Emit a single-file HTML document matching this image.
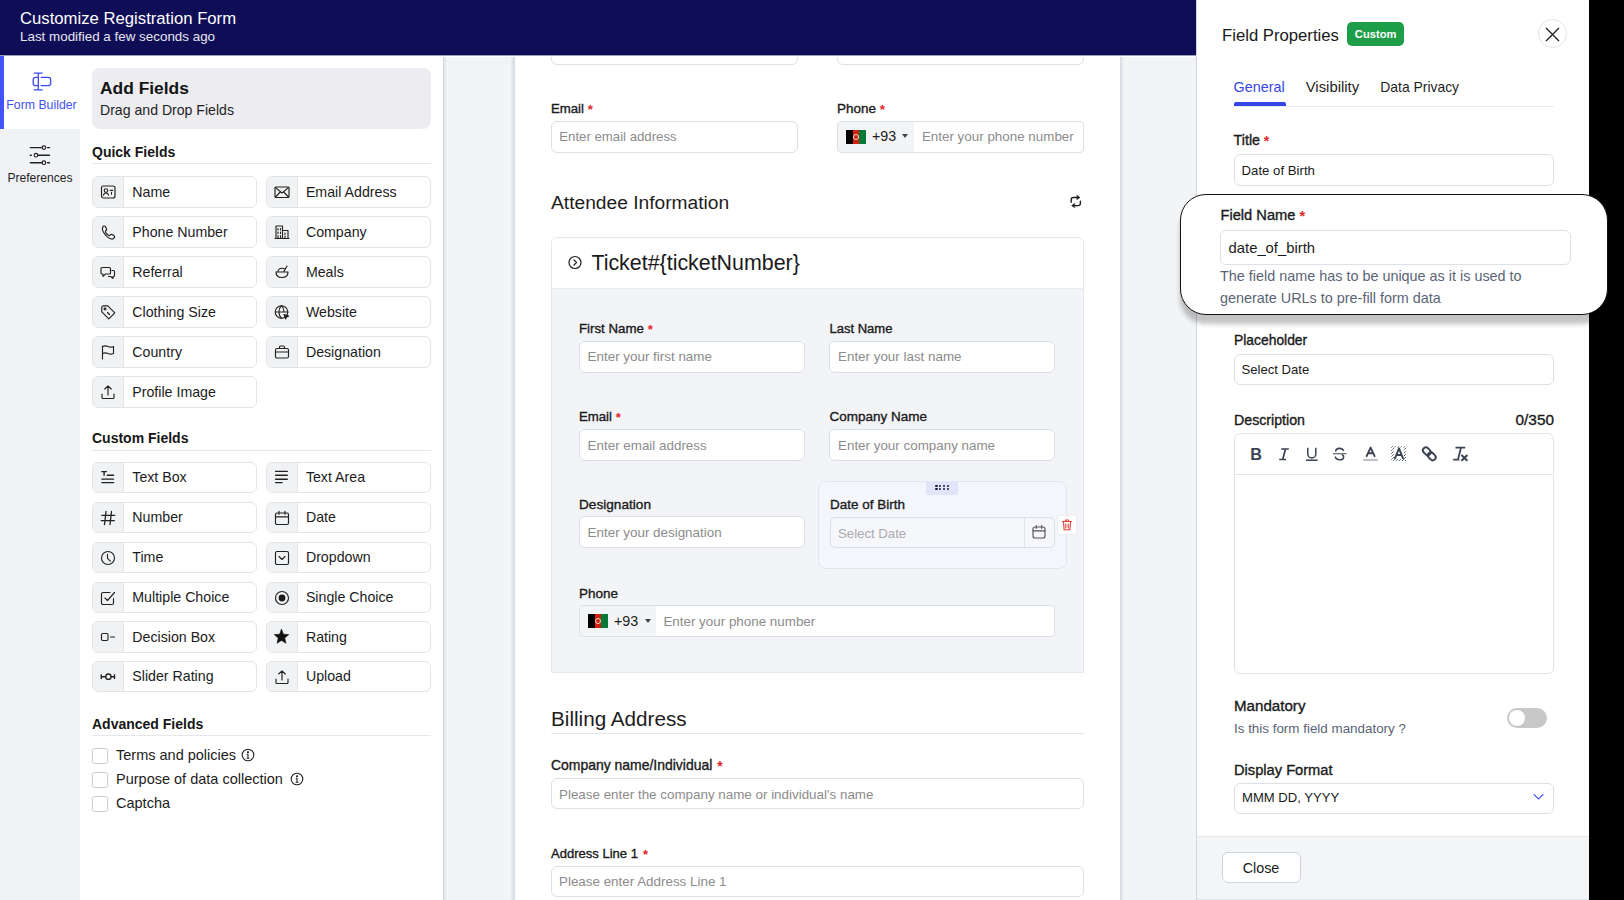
<!DOCTYPE html>
<html><head><meta charset="utf-8"><title>Customize Registration Form</title>
<style>
html,body{margin:0;padding:0;width:1624px;height:900px;overflow:hidden;background:#fff;font-family:"Liberation Sans", sans-serif;}
body{position:relative;}
</style></head><body>
<div style="position:absolute;left:0px;top:55px;width:80px;height:845px;background:#f1f2f5;"></div>
<div style="position:absolute;left:0px;top:56px;width:80px;height:73.4px;background:#ffffff;"></div>
<div style="position:absolute;left:0px;top:56px;width:4px;height:73.4px;background:#4255f4;"></div>
<svg style="position:absolute;left:26px;top:66px;" width="30" height="30" viewBox="0 0 30 30" fill="none" stroke="#222" stroke-width="1.15" stroke-linecap="round" stroke-linejoin="round"><path d="M12.3 7.1V23.9 M8.2 7.1H16.2 M8.2 23.9H16.2 M12.3 11.3H9.7a2.5 2.5 0 0 0-2.5 2.5V17.2a2.5 2.5 0 0 0 2.5 2.5H12.3 M15.2 11.3H22.2a2.5 2.5 0 0 1 2.5 2.5V17.2a2.5 2.5 0 0 1-2.5 2.5H15.2" stroke="#3d4bf0" stroke-width="1.3"/></svg>
<div style="position:absolute;left:-258.50px;width:600px;text-align:center;top:99.00px;font-size:12.3px;line-height:12.3px;font-weight:400;color:#3f52f2;white-space:nowrap;">Form Builder</div>
<svg style="position:absolute;left:28px;top:141px;" width="24" height="26" viewBox="0 0 24 26" fill="none" stroke="#222" stroke-width="1.15" stroke-linecap="round" stroke-linejoin="round"><path d="M2.3 6.6h11.7 M19.5 6.6h2 M2.3 14.2h1 M9.9 14.2h11.6 M2.3 21.7h11.7 M19.5 21.7h2" stroke-width="1.4"/><circle cx="15.9" cy="6.6" r="1.8"/><circle cx="8" cy="14.2" r="1.8"/><circle cx="15.9" cy="21.7" r="1.8"/></svg>
<div style="position:absolute;left:-260.00px;width:600px;text-align:center;top:172.00px;font-size:12.1px;line-height:12.1px;font-weight:400;color:#1f1f1f;white-space:nowrap;">Preferences</div>
<div style="position:absolute;left:80px;top:55px;width:363px;height:845px;background:#ffffff;"></div>
<div style="position:absolute;left:92px;top:68px;width:339px;height:61px;background:#ececf1;border-radius:8px;"></div>
<div style="position:absolute;left:100.00px;top:80.00px;font-size:17.4px;line-height:17.4px;font-weight:700;color:#141414;white-space:nowrap;">Add Fields</div>
<div style="position:absolute;left:100.00px;top:103.00px;font-size:14.1px;line-height:14.1px;font-weight:400;color:#1f1f1f;white-space:nowrap;">Drag and Drop Fields</div>
<div style="position:absolute;left:92.00px;top:145.00px;font-size:14px;line-height:14px;font-weight:700;color:#161616;white-space:nowrap;">Quick Fields</div>
<div style="position:absolute;left:92px;top:163px;width:339px;height:1px;background:#e6e7eb;"></div>
<div style="position:absolute;left:92px;top:176.4px;width:164.8px;height:31.2px;background:#fff;border:1px solid #e2e4e8;box-sizing:border-box;border-radius:6px;overflow:hidden;"></div>
<div style="position:absolute;left:93px;top:177.4px;width:30px;height:29.2px;background:#f1f2f4;border-radius:5px 0 0 5px;"></div>
<div style="position:absolute;left:123px;top:177.4px;width:1px;height:29.2px;background:#e5e7ea;"></div>
<div style="position:absolute;left:132.30px;top:185.00px;font-size:14.2px;line-height:14.2px;font-weight:400;color:#1c1c1c;white-space:nowrap;">Name</div>
<svg style="position:absolute;left:100px;top:184.4px;" width="16" height="16" viewBox="0 0 16 16" fill="none" stroke="#222" stroke-width="1.15" stroke-linecap="round" stroke-linejoin="round"><rect x="1.5" y="2" width="13.5" height="12" rx="2"/><circle cx="6" cy="6.5" r="1.8" stroke-width="1.1"/><path d="M3.3 11.3c.6-1.6 1.6-2.4 2.7-2.4s2.1.8 2.7 2.4 M10.2 6.4h2.6 M11.5 8.4v1.8" stroke-width="1.1"/></svg>
<div style="position:absolute;left:265.6px;top:176.4px;width:165.4px;height:31.2px;background:#fff;border:1px solid #e2e4e8;box-sizing:border-box;border-radius:6px;overflow:hidden;"></div>
<div style="position:absolute;left:266.6px;top:177.4px;width:30px;height:29.2px;background:#f1f2f4;border-radius:5px 0 0 5px;"></div>
<div style="position:absolute;left:296.6px;top:177.4px;width:1px;height:29.2px;background:#e5e7ea;"></div>
<div style="position:absolute;left:305.90px;top:185.00px;font-size:14.2px;line-height:14.2px;font-weight:400;color:#1c1c1c;white-space:nowrap;">Email Address</div>
<svg style="position:absolute;left:273.6px;top:184.4px;" width="16" height="16" viewBox="0 0 16 16" fill="none" stroke="#222" stroke-width="1.15" stroke-linecap="round" stroke-linejoin="round"><rect x="1" y="3" width="14" height="10.5" rx="1"/><path d="M1.3 3.4 8 9l6.7-5.6 M1.5 13l4.8-5 M14.5 13l-4.8-5"/></svg>
<div style="position:absolute;left:92px;top:216.4px;width:164.8px;height:31.2px;background:#fff;border:1px solid #e2e4e8;box-sizing:border-box;border-radius:6px;overflow:hidden;"></div>
<div style="position:absolute;left:93px;top:217.4px;width:30px;height:29.2px;background:#f1f2f4;border-radius:5px 0 0 5px;"></div>
<div style="position:absolute;left:123px;top:217.4px;width:1px;height:29.2px;background:#e5e7ea;"></div>
<div style="position:absolute;left:132.30px;top:225.00px;font-size:14.2px;line-height:14.2px;font-weight:400;color:#1c1c1c;white-space:nowrap;">Phone Number</div>
<svg style="position:absolute;left:100px;top:224.4px;" width="16" height="16" viewBox="0 0 16 16" fill="none" stroke="#222" stroke-width="1.15" stroke-linecap="round" stroke-linejoin="round"><path d="M3.2 2.3c1-.6 1.8-.3 2.3.6l1 1.8c.4.8.1 1.4-.6 1.9-.6.4-.6 1 0 2 .7 1.1 1.5 2 2.5 2.6.9.6 1.5.5 1.9-.2.5-.7 1.2-.9 1.9-.4l1.8 1.1c.8.6.9 1.3.2 2.2-.9 1.2-2.3 1.5-3.7.9C7.9 13.7 4.6 10.4 3 7.2c-.8-1.8-.7-3.6.2-4.9z"/></svg>
<div style="position:absolute;left:265.6px;top:216.4px;width:165.4px;height:31.2px;background:#fff;border:1px solid #e2e4e8;box-sizing:border-box;border-radius:6px;overflow:hidden;"></div>
<div style="position:absolute;left:266.6px;top:217.4px;width:30px;height:29.2px;background:#f1f2f4;border-radius:5px 0 0 5px;"></div>
<div style="position:absolute;left:296.6px;top:217.4px;width:1px;height:29.2px;background:#e5e7ea;"></div>
<div style="position:absolute;left:305.90px;top:225.00px;font-size:14.2px;line-height:14.2px;font-weight:400;color:#1c1c1c;white-space:nowrap;">Company</div>
<svg style="position:absolute;left:273.6px;top:224.4px;" width="16" height="16" viewBox="0 0 16 16" fill="none" stroke="#222" stroke-width="1.15" stroke-linecap="round" stroke-linejoin="round"><path d="M2 14.5V2h6.5v12.5 M8.5 6.5H14v8 M1 14.5h14 M4 4.5v1.5 M6.5 4.5v1.5 M4 8v1.5 M6.5 8v1.5 M4 11.5v3 M6.5 11.5v3 M11 9v1.5 M11 12v2.5"/></svg>
<div style="position:absolute;left:92px;top:256.4px;width:164.8px;height:31.2px;background:#fff;border:1px solid #e2e4e8;box-sizing:border-box;border-radius:6px;overflow:hidden;"></div>
<div style="position:absolute;left:93px;top:257.4px;width:30px;height:29.2px;background:#f1f2f4;border-radius:5px 0 0 5px;"></div>
<div style="position:absolute;left:123px;top:257.4px;width:1px;height:29.2px;background:#e5e7ea;"></div>
<div style="position:absolute;left:132.30px;top:265.00px;font-size:14.2px;line-height:14.2px;font-weight:400;color:#1c1c1c;white-space:nowrap;">Referral</div>
<svg style="position:absolute;left:100px;top:264.4px;" width="16" height="16" viewBox="0 0 16 16" fill="none" stroke="#222" stroke-width="1.15" stroke-linecap="round" stroke-linejoin="round"><path d="M2 3.5h7.5a1 1 0 0 1 1 1V9a1 1 0 0 1-1 1H5.5L3 12.3V10H2a1 1 0 0 1-1-1V4.5a1 1 0 0 1 1-1z M12 6.5h1.5a1 1 0 0 1 1 1v4a1 1 0 0 1-1 1H13v2l-2.3-2H8.5"/></svg>
<div style="position:absolute;left:265.6px;top:256.4px;width:165.4px;height:31.2px;background:#fff;border:1px solid #e2e4e8;box-sizing:border-box;border-radius:6px;overflow:hidden;"></div>
<div style="position:absolute;left:266.6px;top:257.4px;width:30px;height:29.2px;background:#f1f2f4;border-radius:5px 0 0 5px;"></div>
<div style="position:absolute;left:296.6px;top:257.4px;width:1px;height:29.2px;background:#e5e7ea;"></div>
<div style="position:absolute;left:305.90px;top:265.00px;font-size:14.2px;line-height:14.2px;font-weight:400;color:#1c1c1c;white-space:nowrap;">Meals</div>
<svg style="position:absolute;left:273.6px;top:264.4px;" width="16" height="16" viewBox="0 0 16 16" fill="none" stroke="#222" stroke-width="1.15" stroke-linecap="round" stroke-linejoin="round"><path d="M2 8h12c0 3.5-2.6 5.5-6 5.5S2 11.5 2 8z M3.8 8c.4-2.5 2-3.8 4.2-3.8 1.4 0 2.5.5 3.3 1.3 M9.5 8l3.5-6"/></svg>
<div style="position:absolute;left:92px;top:296.4px;width:164.8px;height:31.2px;background:#fff;border:1px solid #e2e4e8;box-sizing:border-box;border-radius:6px;overflow:hidden;"></div>
<div style="position:absolute;left:93px;top:297.4px;width:30px;height:29.2px;background:#f1f2f4;border-radius:5px 0 0 5px;"></div>
<div style="position:absolute;left:123px;top:297.4px;width:1px;height:29.2px;background:#e5e7ea;"></div>
<div style="position:absolute;left:132.30px;top:305.00px;font-size:14.2px;line-height:14.2px;font-weight:400;color:#1c1c1c;white-space:nowrap;">Clothing Size</div>
<svg style="position:absolute;left:100px;top:304.4px;" width="16" height="16" viewBox="0 0 16 16" fill="none" stroke="#222" stroke-width="1.15" stroke-linecap="round" stroke-linejoin="round"><path d="M1.8 3.5V7.8l7 7 6-6-7-7H3.5a1.7 1.7 0 0 0-1.7 1.7z"/><circle cx="5" cy="5" r="0.9"/><path d="M7.5 8.5l2 2" /></svg>
<div style="position:absolute;left:265.6px;top:296.4px;width:165.4px;height:31.2px;background:#fff;border:1px solid #e2e4e8;box-sizing:border-box;border-radius:6px;overflow:hidden;"></div>
<div style="position:absolute;left:266.6px;top:297.4px;width:30px;height:29.2px;background:#f1f2f4;border-radius:5px 0 0 5px;"></div>
<div style="position:absolute;left:296.6px;top:297.4px;width:1px;height:29.2px;background:#e5e7ea;"></div>
<div style="position:absolute;left:305.90px;top:305.00px;font-size:14.2px;line-height:14.2px;font-weight:400;color:#1c1c1c;white-space:nowrap;">Website</div>
<svg style="position:absolute;left:273.6px;top:304.4px;" width="16" height="16" viewBox="0 0 16 16" fill="none" stroke="#222" stroke-width="1.15" stroke-linecap="round" stroke-linejoin="round"><circle cx="7.5" cy="8" r="6.3"/><path d="M1.5 8h12.5 M7.5 1.7c-1.8 1.8-2.6 4-2.6 6.3s.8 4.5 2.6 6.3 M7.5 1.7c1.8 1.8 2.6 4 2.6 6.3"/><path d="M10 10.5l4.5 1.6-2 .8-.8 2z" fill="#2b2b2b"/></svg>
<div style="position:absolute;left:92px;top:336.4px;width:164.8px;height:31.2px;background:#fff;border:1px solid #e2e4e8;box-sizing:border-box;border-radius:6px;overflow:hidden;"></div>
<div style="position:absolute;left:93px;top:337.4px;width:30px;height:29.2px;background:#f1f2f4;border-radius:5px 0 0 5px;"></div>
<div style="position:absolute;left:123px;top:337.4px;width:1px;height:29.2px;background:#e5e7ea;"></div>
<div style="position:absolute;left:132.30px;top:345.00px;font-size:14.2px;line-height:14.2px;font-weight:400;color:#1c1c1c;white-space:nowrap;">Country</div>
<svg style="position:absolute;left:100px;top:344.4px;" width="16" height="16" viewBox="0 0 16 16" fill="none" stroke="#222" stroke-width="1.15" stroke-linecap="round" stroke-linejoin="round"><path d="M2.5 15V2 M2.5 2.5c2-.8 3.5-.8 5.5 0s3.5.8 5.5 0v7c-2 .8-3.5.8-5.5 0s-3.5-.8-5.5 0"/></svg>
<div style="position:absolute;left:265.6px;top:336.4px;width:165.4px;height:31.2px;background:#fff;border:1px solid #e2e4e8;box-sizing:border-box;border-radius:6px;overflow:hidden;"></div>
<div style="position:absolute;left:266.6px;top:337.4px;width:30px;height:29.2px;background:#f1f2f4;border-radius:5px 0 0 5px;"></div>
<div style="position:absolute;left:296.6px;top:337.4px;width:1px;height:29.2px;background:#e5e7ea;"></div>
<div style="position:absolute;left:305.90px;top:345.00px;font-size:14.2px;line-height:14.2px;font-weight:400;color:#1c1c1c;white-space:nowrap;">Designation</div>
<svg style="position:absolute;left:273.6px;top:344.4px;" width="16" height="16" viewBox="0 0 16 16" fill="none" stroke="#222" stroke-width="1.15" stroke-linecap="round" stroke-linejoin="round"><rect x="1.5" y="4.5" width="13" height="9.5" rx="1.5"/><path d="M5.5 4.5V3a1 1 0 0 1 1-1h3a1 1 0 0 1 1 1v1.5 M1.5 8h13"/></svg>
<div style="position:absolute;left:92px;top:376.4px;width:164.8px;height:31.2px;background:#fff;border:1px solid #e2e4e8;box-sizing:border-box;border-radius:6px;overflow:hidden;"></div>
<div style="position:absolute;left:93px;top:377.4px;width:30px;height:29.2px;background:#f1f2f4;border-radius:5px 0 0 5px;"></div>
<div style="position:absolute;left:123px;top:377.4px;width:1px;height:29.2px;background:#e5e7ea;"></div>
<div style="position:absolute;left:132.30px;top:385.00px;font-size:14.2px;line-height:14.2px;font-weight:400;color:#1c1c1c;white-space:nowrap;">Profile Image</div>
<svg style="position:absolute;left:100px;top:384.4px;" width="16" height="16" viewBox="0 0 16 16" fill="none" stroke="#222" stroke-width="1.15" stroke-linecap="round" stroke-linejoin="round"><path d="M2 10v3.5a1 1 0 0 0 1 1h10a1 1 0 0 0 1-1V10 M8 11V1.8 M4.7 5 8 1.8 11.3 5"/></svg>
<div style="position:absolute;left:92.00px;top:431.00px;font-size:14px;line-height:14px;font-weight:700;color:#161616;white-space:nowrap;">Custom Fields</div>
<div style="position:absolute;left:92px;top:449.5px;width:339px;height:1px;background:#e6e7eb;"></div>
<div style="position:absolute;left:92px;top:462.2px;width:164.8px;height:31.2px;background:#fff;border:1px solid #e2e4e8;box-sizing:border-box;border-radius:6px;overflow:hidden;"></div>
<div style="position:absolute;left:93px;top:463.2px;width:30px;height:29.2px;background:#f1f2f4;border-radius:5px 0 0 5px;"></div>
<div style="position:absolute;left:123px;top:463.2px;width:1px;height:29.2px;background:#e5e7ea;"></div>
<div style="position:absolute;left:132.30px;top:470.00px;font-size:14.2px;line-height:14.2px;font-weight:400;color:#1c1c1c;white-space:nowrap;">Text Box</div>
<svg style="position:absolute;left:100px;top:470.2px;" width="16" height="16" viewBox="0 0 16 16" fill="none" stroke="#222" stroke-width="1.15" stroke-linecap="round" stroke-linejoin="round"><path d="M1.8 1.6h4.6 M4.1 1.6v3.6 M7.3 5.3h6.3 M1.9 9.1h11.7 M1.9 12.6h11.7" stroke-width="1.4"/></svg>
<div style="position:absolute;left:265.6px;top:462.2px;width:165.4px;height:31.2px;background:#fff;border:1px solid #e2e4e8;box-sizing:border-box;border-radius:6px;overflow:hidden;"></div>
<div style="position:absolute;left:266.6px;top:463.2px;width:30px;height:29.2px;background:#f1f2f4;border-radius:5px 0 0 5px;"></div>
<div style="position:absolute;left:296.6px;top:463.2px;width:1px;height:29.2px;background:#e5e7ea;"></div>
<div style="position:absolute;left:305.90px;top:470.00px;font-size:14.2px;line-height:14.2px;font-weight:400;color:#1c1c1c;white-space:nowrap;">Text Area</div>
<svg style="position:absolute;left:273.6px;top:470.2px;" width="16" height="16" viewBox="0 0 16 16" fill="none" stroke="#222" stroke-width="1.15" stroke-linecap="round" stroke-linejoin="round"><path d="M1.6 1.4h11.7 M1.6 5.3h11.7 M1.6 9.2h11.7 M1.6 12.6h6.5" stroke-width="1.4"/></svg>
<div style="position:absolute;left:92px;top:502.0px;width:164.8px;height:31.2px;background:#fff;border:1px solid #e2e4e8;box-sizing:border-box;border-radius:6px;overflow:hidden;"></div>
<div style="position:absolute;left:93px;top:503.0px;width:30px;height:29.2px;background:#f1f2f4;border-radius:5px 0 0 5px;"></div>
<div style="position:absolute;left:123px;top:503.0px;width:1px;height:29.2px;background:#e5e7ea;"></div>
<div style="position:absolute;left:132.30px;top:510.00px;font-size:14.2px;line-height:14.2px;font-weight:400;color:#1c1c1c;white-space:nowrap;">Number</div>
<svg style="position:absolute;left:100px;top:510.0px;" width="16" height="16" viewBox="0 0 16 16" fill="none" stroke="#222" stroke-width="1.15" stroke-linecap="round" stroke-linejoin="round"><path d="M6 1.5 4.5 14.5 M11.5 1.5 10 14.5 M1.8 5.3h13 M1.3 10.7h13" stroke-width="1.3"/></svg>
<div style="position:absolute;left:265.6px;top:502.0px;width:165.4px;height:31.2px;background:#fff;border:1px solid #e2e4e8;box-sizing:border-box;border-radius:6px;overflow:hidden;"></div>
<div style="position:absolute;left:266.6px;top:503.0px;width:30px;height:29.2px;background:#f1f2f4;border-radius:5px 0 0 5px;"></div>
<div style="position:absolute;left:296.6px;top:503.0px;width:1px;height:29.2px;background:#e5e7ea;"></div>
<div style="position:absolute;left:305.90px;top:510.00px;font-size:14.2px;line-height:14.2px;font-weight:400;color:#1c1c1c;white-space:nowrap;">Date</div>
<svg style="position:absolute;left:273.6px;top:510.0px;" width="16" height="16" viewBox="0 0 16 16" fill="none" stroke="#222" stroke-width="1.15" stroke-linecap="round" stroke-linejoin="round"><rect x="1.5" y="3" width="13" height="11.5" rx="1.5"/><path d="M1.5 6.8h13 M5 1.3v3 M11 1.3v3"/></svg>
<div style="position:absolute;left:92px;top:541.8px;width:164.8px;height:31.2px;background:#fff;border:1px solid #e2e4e8;box-sizing:border-box;border-radius:6px;overflow:hidden;"></div>
<div style="position:absolute;left:93px;top:542.8px;width:30px;height:29.2px;background:#f1f2f4;border-radius:5px 0 0 5px;"></div>
<div style="position:absolute;left:123px;top:542.8px;width:1px;height:29.2px;background:#e5e7ea;"></div>
<div style="position:absolute;left:132.30px;top:550.00px;font-size:14.2px;line-height:14.2px;font-weight:400;color:#1c1c1c;white-space:nowrap;">Time</div>
<svg style="position:absolute;left:100px;top:549.8px;" width="16" height="16" viewBox="0 0 16 16" fill="none" stroke="#222" stroke-width="1.15" stroke-linecap="round" stroke-linejoin="round"><circle cx="8" cy="8" r="6.5"/><path d="M7.5 4.3V8.3l2.8 2.8"/></svg>
<div style="position:absolute;left:265.6px;top:541.8px;width:165.4px;height:31.2px;background:#fff;border:1px solid #e2e4e8;box-sizing:border-box;border-radius:6px;overflow:hidden;"></div>
<div style="position:absolute;left:266.6px;top:542.8px;width:30px;height:29.2px;background:#f1f2f4;border-radius:5px 0 0 5px;"></div>
<div style="position:absolute;left:296.6px;top:542.8px;width:1px;height:29.2px;background:#e5e7ea;"></div>
<div style="position:absolute;left:305.90px;top:550.00px;font-size:14.2px;line-height:14.2px;font-weight:400;color:#1c1c1c;white-space:nowrap;">Dropdown</div>
<svg style="position:absolute;left:273.6px;top:549.8px;" width="16" height="16" viewBox="0 0 16 16" fill="none" stroke="#222" stroke-width="1.15" stroke-linecap="round" stroke-linejoin="round"><rect x="1.5" y="1.5" width="13" height="13" rx="1.5"/><path d="M5 6.5 8 9.5 11 6.5"/></svg>
<div style="position:absolute;left:92px;top:581.6px;width:164.8px;height:31.2px;background:#fff;border:1px solid #e2e4e8;box-sizing:border-box;border-radius:6px;overflow:hidden;"></div>
<div style="position:absolute;left:93px;top:582.6px;width:30px;height:29.2px;background:#f1f2f4;border-radius:5px 0 0 5px;"></div>
<div style="position:absolute;left:123px;top:582.6px;width:1px;height:29.2px;background:#e5e7ea;"></div>
<div style="position:absolute;left:132.30px;top:590.00px;font-size:14.2px;line-height:14.2px;font-weight:400;color:#1c1c1c;white-space:nowrap;">Multiple Choice</div>
<svg style="position:absolute;left:100px;top:589.6px;" width="16" height="16" viewBox="0 0 16 16" fill="none" stroke="#222" stroke-width="1.15" stroke-linecap="round" stroke-linejoin="round"><path d="M13.5 8.5v4.5a1.5 1.5 0 0 1-1.5 1.5H3A1.5 1.5 0 0 1 1.5 13V4A1.5 1.5 0 0 1 3 2.5h7 M5 8l2.5 2.5 L14.5 2.5"/></svg>
<div style="position:absolute;left:265.6px;top:581.6px;width:165.4px;height:31.2px;background:#fff;border:1px solid #e2e4e8;box-sizing:border-box;border-radius:6px;overflow:hidden;"></div>
<div style="position:absolute;left:266.6px;top:582.6px;width:30px;height:29.2px;background:#f1f2f4;border-radius:5px 0 0 5px;"></div>
<div style="position:absolute;left:296.6px;top:582.6px;width:1px;height:29.2px;background:#e5e7ea;"></div>
<div style="position:absolute;left:305.90px;top:590.00px;font-size:14.2px;line-height:14.2px;font-weight:400;color:#1c1c1c;white-space:nowrap;">Single Choice</div>
<svg style="position:absolute;left:273.6px;top:589.6px;" width="16" height="16" viewBox="0 0 16 16" fill="none" stroke="#222" stroke-width="1.15" stroke-linecap="round" stroke-linejoin="round"><circle cx="8" cy="8" r="6.5"/><circle cx="8" cy="8" r="3.4" fill="#1c1c1c" stroke="none"/></svg>
<div style="position:absolute;left:92px;top:621.4px;width:164.8px;height:31.2px;background:#fff;border:1px solid #e2e4e8;box-sizing:border-box;border-radius:6px;overflow:hidden;"></div>
<div style="position:absolute;left:93px;top:622.4px;width:30px;height:29.2px;background:#f1f2f4;border-radius:5px 0 0 5px;"></div>
<div style="position:absolute;left:123px;top:622.4px;width:1px;height:29.2px;background:#e5e7ea;"></div>
<div style="position:absolute;left:132.30px;top:630.00px;font-size:14.2px;line-height:14.2px;font-weight:400;color:#1c1c1c;white-space:nowrap;">Decision Box</div>
<svg style="position:absolute;left:100px;top:629.4px;" width="16" height="16" viewBox="0 0 16 16" fill="none" stroke="#222" stroke-width="1.15" stroke-linecap="round" stroke-linejoin="round"><rect x="1.5" y="4.5" width="6.5" height="7" rx="1.2"/><path d="M10.5 8h4"/></svg>
<div style="position:absolute;left:265.6px;top:621.4px;width:165.4px;height:31.2px;background:#fff;border:1px solid #e2e4e8;box-sizing:border-box;border-radius:6px;overflow:hidden;"></div>
<div style="position:absolute;left:266.6px;top:622.4px;width:30px;height:29.2px;background:#f1f2f4;border-radius:5px 0 0 5px;"></div>
<div style="position:absolute;left:296.6px;top:622.4px;width:1px;height:29.2px;background:#e5e7ea;"></div>
<div style="position:absolute;left:305.90px;top:630.00px;font-size:14.2px;line-height:14.2px;font-weight:400;color:#1c1c1c;white-space:nowrap;">Rating</div>
<svg style="position:absolute;left:273.6px;top:629.4px;" width="16" height="16" viewBox="0 0 16 16" fill="none" stroke="#222" stroke-width="1.15" stroke-linecap="round" stroke-linejoin="round"><path d="M7.50 0.30 L9.50 5.25 L14.82 5.62 L10.73 9.05 L12.03 14.23 L7.50 11.40 L2.97 14.23 L4.27 9.05 L0.18 5.62 L5.50 5.25z" fill="#111" stroke="#111" stroke-width="0.6"/></svg>
<div style="position:absolute;left:92px;top:661.2px;width:164.8px;height:31.2px;background:#fff;border:1px solid #e2e4e8;box-sizing:border-box;border-radius:6px;overflow:hidden;"></div>
<div style="position:absolute;left:93px;top:662.2px;width:30px;height:29.2px;background:#f1f2f4;border-radius:5px 0 0 5px;"></div>
<div style="position:absolute;left:123px;top:662.2px;width:1px;height:29.2px;background:#e5e7ea;"></div>
<div style="position:absolute;left:132.30px;top:669.00px;font-size:14.2px;line-height:14.2px;font-weight:400;color:#1c1c1c;white-space:nowrap;">Slider Rating</div>
<svg style="position:absolute;left:100px;top:669.2px;" width="16" height="16" viewBox="0 0 16 16" fill="none" stroke="#222" stroke-width="1.15" stroke-linecap="round" stroke-linejoin="round"><path d="M1.3 5.9v3.6 M1.3 7.7h4.4 M11.1 7.7h3.4 M14.5 6v3.4" stroke-width="1.4"/><circle cx="8.4" cy="7.7" r="2.7" stroke-width="1.3"/></svg>
<div style="position:absolute;left:265.6px;top:661.2px;width:165.4px;height:31.2px;background:#fff;border:1px solid #e2e4e8;box-sizing:border-box;border-radius:6px;overflow:hidden;"></div>
<div style="position:absolute;left:266.6px;top:662.2px;width:30px;height:29.2px;background:#f1f2f4;border-radius:5px 0 0 5px;"></div>
<div style="position:absolute;left:296.6px;top:662.2px;width:1px;height:29.2px;background:#e5e7ea;"></div>
<div style="position:absolute;left:305.90px;top:669.00px;font-size:14.2px;line-height:14.2px;font-weight:400;color:#1c1c1c;white-space:nowrap;">Upload</div>
<svg style="position:absolute;left:273.6px;top:669.2px;" width="16" height="16" viewBox="0 0 16 16" fill="none" stroke="#222" stroke-width="1.15" stroke-linecap="round" stroke-linejoin="round"><path d="M2 10v3.5a1 1 0 0 0 1 1h10a1 1 0 0 0 1-1V10 M8 11V1.8 M4.7 5 8 1.8 11.3 5"/></svg>
<div style="position:absolute;left:92.00px;top:717.00px;font-size:14px;line-height:14px;font-weight:700;color:#161616;white-space:nowrap;">Advanced Fields</div>
<div style="position:absolute;left:92px;top:735px;width:339px;height:1px;background:#e6e7eb;"></div>
<div style="position:absolute;left:92px;top:748px;width:15.5px;height:15.5px;background:#fff;border:1px solid #c9ccd3;box-sizing:border-box;border-radius:3px;"></div>
<div style="position:absolute;left:116.00px;top:748.00px;font-size:14.5px;line-height:14.5px;font-weight:400;color:#1c1c1c;white-space:nowrap;">Terms and policies</div>
<svg style="position:absolute;left:241.3px;top:748px;" width="14" height="14" viewBox="0 0 14 14" fill="none" stroke="#222" stroke-width="1.15" stroke-linecap="round" stroke-linejoin="round"><circle cx="7" cy="7" r="5.8" stroke-width="1.1"/><path d="M7 6.2v4 M6 10.2h2 M6.2 6.2H7" stroke-width="1.1"/><circle cx="7" cy="4.2" r="0.5" fill="#2b2b2b"/></svg>
<div style="position:absolute;left:92px;top:772px;width:15.5px;height:15.5px;background:#fff;border:1px solid #c9ccd3;box-sizing:border-box;border-radius:3px;"></div>
<div style="position:absolute;left:116.00px;top:772.00px;font-size:14.5px;line-height:14.5px;font-weight:400;color:#1c1c1c;white-space:nowrap;">Purpose of data collection</div>
<svg style="position:absolute;left:289.8px;top:772px;" width="14" height="14" viewBox="0 0 14 14" fill="none" stroke="#222" stroke-width="1.15" stroke-linecap="round" stroke-linejoin="round"><circle cx="7" cy="7" r="5.8" stroke-width="1.1"/><path d="M7 6.2v4 M6 10.2h2 M6.2 6.2H7" stroke-width="1.1"/><circle cx="7" cy="4.2" r="0.5" fill="#2b2b2b"/></svg>
<div style="position:absolute;left:92px;top:796px;width:15.5px;height:15.5px;background:#fff;border:1px solid #c9ccd3;box-sizing:border-box;border-radius:3px;"></div>
<div style="position:absolute;left:116.00px;top:796.00px;font-size:14.5px;line-height:14.5px;font-weight:400;color:#1c1c1c;white-space:nowrap;">Captcha</div>
<div style="position:absolute;left:444px;top:57px;width:71px;height:843px;background:#f3f4f6;"></div>
<div style="position:absolute;left:443px;top:55px;width:4px;height:845px;background:linear-gradient(90deg,#cbd4db,#e3e8ec 45%,#f3f4f6);"></div>
<div style="position:absolute;left:515px;top:55px;width:605px;height:845px;background:#ffffff;"></div>
<div style="position:absolute;left:510px;top:57px;width:5px;height:843px;background:linear-gradient(90deg,#f3f4f6,#e6e9ee 40%,#d6dde5 80%,#d6dde5);"></div>
<div style="position:absolute;left:1120px;top:57px;width:76px;height:843px;background:#f3f4f6;"></div>
<div style="position:absolute;left:1120px;top:57px;width:4px;height:843px;background:linear-gradient(90deg,#d3dae3,#e2e6eb 40%,#f3f4f6);"></div>
<div style="position:absolute;left:551px;top:30px;width:246.5px;height:34.5px;background:#fff;border:1px solid #dcdfe5;box-sizing:border-box;border-radius:6px;"></div>
<div style="position:absolute;left:837px;top:30px;width:247px;height:34.5px;background:#fff;border:1px solid #dcdfe5;box-sizing:border-box;border-radius:6px;"></div>
<div style="position:absolute;left:551.00px;top:102.00px;font-size:13.2px;line-height:13.2px;font-weight:400;color:#1a1a1a;white-space:nowrap;-webkit-text-stroke:0.35px #1a1a1a;">Email<span style="color:#e0262b;margin-left:3.8px;position:relative;top:1px;-webkit-text-stroke:0;font-weight:700;">*</span></div>
<div style="position:absolute;left:551px;top:121px;width:246.5px;height:31.5px;background:#fff;border:1px solid #dcdfe5;box-sizing:border-box;border-radius:6px;"></div>
<div style="position:absolute;left:559.30px;top:130.00px;font-size:13.2px;line-height:13.2px;font-weight:400;color:#8c8c8c;white-space:nowrap;">Enter email address</div>
<div style="position:absolute;left:837.00px;top:102.00px;font-size:13.481481481481481px;line-height:13.481481481481481px;font-weight:400;color:#1a1a1a;white-space:nowrap;-webkit-text-stroke:0.35px #1a1a1a;">Phone<span style="color:#e0262b;margin-left:3.8px;position:relative;top:1px;-webkit-text-stroke:0;font-weight:700;">*</span></div>
<div style="position:absolute;left:837px;top:121px;width:247px;height:31.5px;background:#fff;border:1px solid #dcdfe5;box-sizing:border-box;border-radius:4px;"></div>
<div style="position:absolute;left:838px;top:122px;width:76px;height:29.5px;background:#f3f4f6;border-radius:3px 0 0 3px;"></div>
<div style="position:absolute;left:846px;top:130px;width:20px;height:13.5px;background:linear-gradient(90deg,#000 0 33%,#d32011 33% 66%,#007a36 66%);"></div>
<div style="position:absolute;left:853px;top:133.5px;width:6px;height:6px;border:1px solid #f4d7c8;border-radius:50%;box-sizing:border-box;"></div>
<div style="position:absolute;left:872.00px;top:129.00px;font-size:14.3px;line-height:14.3px;font-weight:400;color:#1c1c1c;white-space:nowrap;">+93</div>
<div style="position:absolute;left:902px;top:134.3px;width:0;height:0;border-left:3px solid transparent;border-right:3px solid transparent;border-top:4px solid #444;"></div>
<div style="position:absolute;left:921.90px;top:130.00px;font-size:13.4px;line-height:13.4px;font-weight:400;color:#8c8c8c;white-space:nowrap;">Enter your phone number</div>
<div style="position:absolute;left:551.00px;top:193.00px;font-size:19.2px;line-height:19.2px;font-weight:400;color:#1d1d1d;white-space:nowrap;">Attendee Information</div>
<svg style="position:absolute;left:0;top:0" width="1624" height="900" fill="none" stroke-linecap="round" stroke-linejoin="round"><path d="M1071.2 202.2V199.6a2.1 2.1 0 0 1 2.1-2.1H1078 M1080.4 201.2V203.5a2.1 2.1 0 0 1-2.1 2.1H1073.4" stroke="#1c1c1c" stroke-width="1.4"/><path d="M1077.2 195.5 1079.9 197.5 1077.2 199.5z M1074.4 203.6 1071.7 205.6 1074.4 207.6z" fill="#1c1c1c" stroke="#1c1c1c" stroke-width="0.6"/></svg>
<div style="position:absolute;left:551px;top:237px;width:533px;height:436px;background:#f3f4f7;border:1px solid #e6e8ec;box-sizing:border-box;border-radius:6px 6px 0 0;"></div>
<div style="position:absolute;left:552px;top:238px;width:531px;height:51px;background:#ffffff;border-radius:5px 5px 0 0;border-bottom:1px solid #e8eaee;box-sizing:border-box;"></div>
<svg style="position:absolute;left:567px;top:255px;" width="16" height="16" viewBox="0 0 16 16" fill="none" stroke="#222" stroke-width="1.15" stroke-linecap="round" stroke-linejoin="round"><circle cx="8" cy="7.5" r="6" stroke-width="1.2"/><path d="M7 5l2.5 2.5L7 10" stroke-width="1.2"/></svg>
<div style="position:absolute;left:591.40px;top:253.00px;font-size:21.4px;line-height:21.4px;font-weight:400;color:#1a1a1a;white-space:nowrap;">Ticket#{ticketNumber}</div>
<div style="position:absolute;left:579.00px;top:322.00px;font-size:13.284671532846716px;line-height:13.284671532846716px;font-weight:400;color:#1a1a1a;white-space:nowrap;-webkit-text-stroke:0.35px #1a1a1a;">First Name<span style="color:#e0262b;margin-left:3.8px;position:relative;top:1px;-webkit-text-stroke:0;font-weight:700;">*</span></div>
<div style="position:absolute;left:579px;top:341px;width:226px;height:31.5px;background:#fff;border:1px solid #dcdfe5;box-sizing:border-box;border-radius:6px;"></div>
<div style="position:absolute;left:587.60px;top:350.00px;font-size:13.4px;line-height:13.4px;font-weight:400;color:#8c8c8c;white-space:nowrap;">Enter your first name</div>
<div style="position:absolute;left:829.40px;top:322.00px;font-size:13.069423929098967px;line-height:13.069423929098967px;font-weight:400;color:#1a1a1a;white-space:nowrap;-webkit-text-stroke:0.35px #1a1a1a;">Last Name</div>
<div style="position:absolute;left:829.4px;top:341px;width:225.6px;height:31.5px;background:#fff;border:1px solid #dcdfe5;box-sizing:border-box;border-radius:6px;"></div>
<div style="position:absolute;left:838.00px;top:350.00px;font-size:13.4px;line-height:13.4px;font-weight:400;color:#8c8c8c;white-space:nowrap;">Enter your last name</div>
<div style="position:absolute;left:579.00px;top:410.00px;font-size:13.2px;line-height:13.2px;font-weight:400;color:#1a1a1a;white-space:nowrap;-webkit-text-stroke:0.35px #1a1a1a;">Email<span style="color:#e0262b;margin-left:3.8px;position:relative;top:1px;-webkit-text-stroke:0;font-weight:700;">*</span></div>
<div style="position:absolute;left:579px;top:428.5px;width:226px;height:32px;background:#fff;border:1px solid #dcdfe5;box-sizing:border-box;border-radius:6px;"></div>
<div style="position:absolute;left:587.60px;top:439.00px;font-size:13.4px;line-height:13.4px;font-weight:400;color:#8c8c8c;white-space:nowrap;">Enter email address</div>
<div style="position:absolute;left:829.40px;top:410.00px;font-size:13.501976284584979px;line-height:13.501976284584979px;font-weight:400;color:#1a1a1a;white-space:nowrap;-webkit-text-stroke:0.35px #1a1a1a;">Company Name</div>
<div style="position:absolute;left:829.4px;top:428.5px;width:225.6px;height:32px;background:#fff;border:1px solid #dcdfe5;box-sizing:border-box;border-radius:6px;"></div>
<div style="position:absolute;left:838.00px;top:439.00px;font-size:13.4px;line-height:13.4px;font-weight:400;color:#8c8c8c;white-space:nowrap;">Enter your company name</div>
<div style="position:absolute;left:579.00px;top:498.00px;font-size:13.640054127198916px;line-height:13.640054127198916px;font-weight:400;color:#1a1a1a;white-space:nowrap;-webkit-text-stroke:0.35px #1a1a1a;">Designation</div>
<div style="position:absolute;left:579px;top:516.3px;width:226px;height:31.5px;background:#fff;border:1px solid #dcdfe5;box-sizing:border-box;border-radius:6px;"></div>
<div style="position:absolute;left:587.60px;top:526.00px;font-size:13.4px;line-height:13.4px;font-weight:400;color:#8c8c8c;white-space:nowrap;">Enter your designation</div>
<div style="position:absolute;left:817.5px;top:480.5px;width:249.5px;height:88px;background:#f4f6fd;border:1px solid #e2e6f1;box-sizing:border-box;border-radius:8px;"></div>
<div style="position:absolute;left:926px;top:480.5px;width:32px;height:14.5px;background:#e1e5fa;border-radius:0 0 3px 3px;"></div>
<div style="position:absolute;left:935.4px;top:484.5px;width:2.2px;height:2.2px;background:#1a1f36;border-radius:1.1px;"></div>
<div style="position:absolute;left:939.15px;top:484.5px;width:2.2px;height:2.2px;background:#1a1f36;border-radius:1.1px;"></div>
<div style="position:absolute;left:942.9px;top:484.5px;width:2.2px;height:2.2px;background:#1a1f36;border-radius:1.1px;"></div>
<div style="position:absolute;left:946.65px;top:484.5px;width:2.2px;height:2.2px;background:#1a1f36;border-radius:1.1px;"></div>
<div style="position:absolute;left:935.4px;top:488.3px;width:2.2px;height:2.2px;background:#1a1f36;border-radius:1.1px;"></div>
<div style="position:absolute;left:939.15px;top:488.3px;width:2.2px;height:2.2px;background:#1a1f36;border-radius:1.1px;"></div>
<div style="position:absolute;left:942.9px;top:488.3px;width:2.2px;height:2.2px;background:#1a1f36;border-radius:1.1px;"></div>
<div style="position:absolute;left:946.65px;top:488.3px;width:2.2px;height:2.2px;background:#1a1f36;border-radius:1.1px;"></div>
<div style="position:absolute;left:830.00px;top:498.00px;font-size:13.496143958868895px;line-height:13.496143958868895px;font-weight:400;color:#1a1a1a;white-space:nowrap;-webkit-text-stroke:0.35px #1a1a1a;">Date of Birth</div>
<div style="position:absolute;left:830px;top:517.4px;width:224.5px;height:30.8px;background:#f6f7fb;border:1px solid #dcdfe6;box-sizing:border-box;border-radius:5px;"></div>
<div style="position:absolute;left:1024px;top:518.4px;width:1px;height:28.8px;background:#e1e3e8;"></div>
<div style="position:absolute;left:838.00px;top:527.00px;font-size:13.2px;line-height:13.2px;font-weight:400;color:#a9abb0;white-space:nowrap;">Select Date</div>
<svg style="position:absolute;left:1031px;top:524px;" width="16" height="16" viewBox="0 0 16 16" fill="none" stroke="#222" stroke-width="1.15" stroke-linecap="round" stroke-linejoin="round"><rect x="2" y="3" width="12" height="11" rx="2" stroke="#555"/><path d="M2 6.8h12 M5.3 1.5v2.8 M10.7 1.5v2.8" stroke="#555"/></svg>
<div style="position:absolute;left:1056.5px;top:515px;width:20.5px;height:19.5px;background:#fff;border:1px solid #eceef2;box-sizing:border-box;border-radius:2px;"></div>
<svg style="position:absolute;left:1060px;top:518px;" width="14" height="14" viewBox="0 0 14 14" fill="none" stroke="#222" stroke-width="1.15" stroke-linecap="round" stroke-linejoin="round"><path d="M2.5 3.5h9 M5.5 3.3V2h3v1.3 M3.5 3.8l.6 8h5.8l.6-8 M5.8 6v4 M8.2 6v4" stroke="#e3403a" stroke-width="1.1"/></svg>
<div style="position:absolute;left:579.00px;top:587.00px;font-size:13.481481481481481px;line-height:13.481481481481481px;font-weight:400;color:#1a1a1a;white-space:nowrap;-webkit-text-stroke:0.35px #1a1a1a;">Phone</div>
<div style="position:absolute;left:579px;top:605px;width:476px;height:32px;background:#fff;border:1px solid #dcdfe5;box-sizing:border-box;border-radius:4px;"></div>
<div style="position:absolute;left:580px;top:606px;width:76px;height:30px;background:#f3f4f6;border-radius:3px 0 0 3px;"></div>
<div style="position:absolute;left:588px;top:614px;width:20px;height:13.5px;background:linear-gradient(90deg,#000 0 33%,#d32011 33% 66%,#007a36 66%);"></div>
<div style="position:absolute;left:595px;top:617.5px;width:6px;height:6px;border:1px solid #f4d7c8;border-radius:50%;box-sizing:border-box;"></div>
<div style="position:absolute;left:614.00px;top:614.00px;font-size:14.3px;line-height:14.3px;font-weight:400;color:#1c1c1c;white-space:nowrap;">+93</div>
<div style="position:absolute;left:644.5px;top:619.2px;width:0;height:0;border-left:3px solid transparent;border-right:3px solid transparent;border-top:4px solid #444;"></div>
<div style="position:absolute;left:663.40px;top:615.00px;font-size:13.4px;line-height:13.4px;font-weight:400;color:#8c8c8c;white-space:nowrap;">Enter your phone number</div>
<div style="position:absolute;left:551.00px;top:709.00px;font-size:20.7px;line-height:20.7px;font-weight:400;color:#1d1d1d;white-space:nowrap;">Billing Address</div>
<div style="position:absolute;left:551px;top:733px;width:533px;height:1px;background:#e4e6ea;"></div>
<div style="position:absolute;left:551.00px;top:759.00px;font-size:13.965410747374923px;line-height:13.965410747374923px;font-weight:400;color:#1a1a1a;white-space:nowrap;-webkit-text-stroke:0.35px #1a1a1a;">Company name/Individual<span style="color:#e0262b;margin-left:5px;position:relative;top:1px;-webkit-text-stroke:0;font-weight:700;">*</span></div>
<div style="position:absolute;left:551px;top:777.8px;width:533px;height:31.5px;background:#fff;border:1px solid #dcdfe5;box-sizing:border-box;border-radius:6px;"></div>
<div style="position:absolute;left:559.00px;top:788.00px;font-size:13.4px;line-height:13.4px;font-weight:400;color:#8c8c8c;white-space:nowrap;">Please enter the company name or individual's name</div>
<div style="position:absolute;left:551.00px;top:847.00px;font-size:13.0406852248394px;line-height:13.0406852248394px;font-weight:400;color:#1a1a1a;white-space:nowrap;-webkit-text-stroke:0.35px #1a1a1a;">Address Line 1<span style="color:#e0262b;margin-left:5px;position:relative;top:1px;-webkit-text-stroke:0;font-weight:700;">*</span></div>
<div style="position:absolute;left:551px;top:865.8px;width:533px;height:31.5px;background:#fff;border:1px solid #dcdfe5;box-sizing:border-box;border-radius:6px;"></div>
<div style="position:absolute;left:559.00px;top:875.00px;font-size:13.4px;line-height:13.4px;font-weight:400;color:#8c8c8c;white-space:nowrap;">Please enter Address Line 1</div>
<div style="position:absolute;left:0px;top:0px;width:1196px;height:55px;background:#100d57;"></div>
<div style="position:absolute;left:0px;top:55px;width:1196px;height:1px;background:#9e9cb8;"></div>
<div style="position:absolute;left:443px;top:56px;width:753px;height:1px;background:#ffffff;"></div>
<div style="position:absolute;left:20.00px;top:11.00px;font-size:16.7px;line-height:16.7px;font-weight:400;color:#ffffff;white-space:nowrap;">Customize Registration Form</div>
<div style="position:absolute;left:20.00px;top:30.00px;font-size:13.4px;line-height:13.4px;font-weight:400;color:#e6e6ef;white-space:nowrap;">Last modified a few seconds ago</div>
<div style="position:absolute;left:1196px;top:0px;width:393px;height:900px;background:#ffffff;"></div>
<div style="position:absolute;left:1196px;top:0px;width:1px;height:900px;background:#d3d8e0;"></div>
<div style="position:absolute;left:1222.00px;top:28.00px;font-size:16.7px;line-height:16.7px;font-weight:400;color:#1a1a1a;white-space:nowrap;">Field Properties</div>
<div style="position:absolute;left:1347px;top:22px;width:57px;height:23.7px;background:#1f9e49;border-radius:5px;"></div>
<div style="position:absolute;left:1075.70px;width:600px;text-align:center;top:29.00px;font-size:11.2px;line-height:11.2px;font-weight:700;color:#ffffff;white-space:nowrap;">Custom</div>
<div style="position:absolute;left:1538px;top:19.2px;width:29px;height:29px;background:#fff;border:1px solid #e1e3e8;box-sizing:border-box;border-radius:15px;"></div>
<svg style="position:absolute;left:1545px;top:26.5px;" width="15" height="15" viewBox="0 0 15 15" fill="none" stroke="#222" stroke-width="1.15" stroke-linecap="round" stroke-linejoin="round"><path d="M1.3 1.3l12.4 12.4 M13.7 1.3l-12.4 12.4" stroke="#1a1a1a" stroke-width="1.25"/></svg>
<div style="position:absolute;left:1233.60px;top:80.00px;font-size:14.4px;line-height:14.4px;font-weight:400;color:#3546e6;white-space:nowrap;">General</div>
<div style="position:absolute;left:1305.70px;top:80.00px;font-size:14.9px;line-height:14.9px;font-weight:400;color:#1f1f1f;white-space:nowrap;">Visibility</div>
<div style="position:absolute;left:1380.30px;top:81.00px;font-size:13.9px;line-height:13.9px;font-weight:400;color:#1f1f1f;white-space:nowrap;">Data Privacy</div>
<div style="position:absolute;left:1233px;top:106px;width:321px;height:1px;background:#e8eaee;"></div>
<div style="position:absolute;left:1233.5px;top:102.4px;width:52px;height:3.6px;background:#3546e6;border-radius:2px 2px 0 0;"></div>
<div style="position:absolute;left:1233.60px;top:133.00px;font-size:14.27027027027027px;line-height:14.27027027027027px;font-weight:400;color:#1a1a1a;white-space:nowrap;-webkit-text-stroke:0.35px #1a1a1a;">Title<span style="color:#e0262b;margin-left:3.8px;position:relative;top:1px;-webkit-text-stroke:0;font-weight:700;">*</span></div>
<div style="position:absolute;left:1233.5px;top:154.2px;width:320.5px;height:31.5px;background:#fff;border:1px solid #dcdfe5;box-sizing:border-box;border-radius:6px;"></div>
<div style="position:absolute;left:1241.60px;top:164.00px;font-size:13.2px;line-height:13.2px;font-weight:400;color:#1a1a1a;white-space:nowrap;">Date of Birth</div>
<div style="position:absolute;left:1234.00px;top:334.00px;font-size:13.867388362652232px;line-height:13.867388362652232px;font-weight:400;color:#1a1a1a;white-space:nowrap;-webkit-text-stroke:0.35px #1a1a1a;">Placeholder</div>
<div style="position:absolute;left:1234px;top:354px;width:320px;height:31.3px;background:#fff;border:1px solid #dcdfe5;box-sizing:border-box;border-radius:6px;"></div>
<div style="position:absolute;left:1241.60px;top:363.00px;font-size:13.1px;line-height:13.1px;font-weight:400;color:#1a1a1a;white-space:nowrap;">Select Date</div>
<div style="position:absolute;left:1234.00px;top:413.00px;font-size:14.2px;line-height:14.2px;font-weight:400;color:#1a1a1a;white-space:nowrap;-webkit-text-stroke:0.35px #1a1a1a;">Description</div>
<div style="position:absolute;right:70.00px;top:412.00px;font-size:15.4px;line-height:15.4px;font-weight:400;color:#1a1a1a;white-space:nowrap;-webkit-text-stroke:0.35px #1a1a1a;">0/350</div>
<div style="position:absolute;left:1233.7px;top:433.3px;width:320.6px;height:241px;background:#fff;border:1px solid #dfe2e8;box-sizing:border-box;border-radius:6px;"></div>
<div style="position:absolute;left:1234.7px;top:474px;width:318.6px;height:1px;background:#e4e6ea;"></div>
<svg style="position:absolute;left:0;top:0" width="1624" height="900" fill="none" stroke-linecap="round" stroke-linejoin="round"><text x="1256" y="460" font-family="Liberation Sans" font-size="16.2" font-weight="700" fill="#3b4352" stroke="none" text-anchor="middle">B</text><path d="M1281.2 449H1288.8 M1279.2 459.5H1286 M1285.5 449l-2.8 10.5" stroke="#3b4352" stroke-width="1.7" stroke-linecap="butt"/><path d="M1307.8 447.8v6.2a4 4 0 0 0 8 0V447.8 M1306 460.3h11.6" stroke="#3b4352" stroke-width="1.5" stroke-linecap="butt"/><path d="M1343.5 450.3c-.8-1.3-2.2-1.9-3.9-1.9-2.2 0-3.8 1.1-3.8 2.7 M1335.4 457.2c.6 1.6 2.1 2.5 4.2 2.5 2.4 0 4-1.1 4-2.8 0-.9-.4-1.6-1.2-2" stroke="#3b4352" stroke-width="1.6"/><path d="M1333.5 453.7H1346" stroke="#3b4352" stroke-width="1.1"/><path d="M1366.6 456.2 1370.6 447.6 1374.6 456.2 M1368 453.3H1373.2" stroke="#3b4352" stroke-width="1.9"/><path d="M1363.8 460H1377.2" stroke="#a9aeb7" stroke-width="1.6"/><defs><clipPath id="hc"><rect x="1391.2" y="446.3" width="14.8" height="14.7"/></clipPath></defs><path clip-path="url(#hc)" d="M1375 461 L1390 446 M1378 461 L1393 446 M1381 461 L1396 446 M1384 461 L1399 446 M1387 461 L1402 446 M1390 461 L1405 446 M1393 461 L1408 446 M1396 461 L1411 446 M1399 461 L1414 446 M1402 461 L1417 446 M1405 461 L1420 446 M1408 461 L1423 446 " stroke="#4a5160" stroke-width="0.9" stroke-dasharray="2.2 1.2"/><path d="M1394.2 447.5h9.6v11.5h-9.6z" fill="#fff" stroke="none"/><path d="M1395 458.3 1399 448.3 1403 458.3 M1396.4 455H1401.6" stroke="#3b4352" stroke-width="1.9"/><g transform="rotate(-45 1429.3 453.8)"><rect x="1426.3" y="446" width="6" height="8.6" rx="3" stroke="#3b4352" stroke-width="1.9"/><rect x="1426.3" y="453" width="6" height="8.6" rx="3" stroke="#3b4352" stroke-width="1.9"/></g><path d="M1455.5 447.6H1465.2 M1461 447.6 1458.2 458.8 M1453.2 459.6H1459.4" stroke="#3b4352" stroke-width="1.8" stroke-linecap="butt"/><path d="M1462 455.5l4.8 4.8 M1466.8 455.5l-4.8 4.8" stroke="#3b4352" stroke-width="2"/></svg>
<div style="position:absolute;left:1234.00px;top:698.00px;font-size:15.141993957703924px;line-height:15.141993957703924px;font-weight:400;color:#1a1a1a;white-space:nowrap;-webkit-text-stroke:0.35px #1a1a1a;">Mandatory</div>
<div style="position:absolute;left:1234.00px;top:722.00px;font-size:13.4px;line-height:13.4px;font-weight:400;color:#5a6476;white-space:nowrap;">Is this form field mandatory ?</div>
<div style="position:absolute;left:1507px;top:708.3px;width:40px;height:19.8px;background:#c8c8c8;border-radius:10px;"></div>
<div style="position:absolute;left:1509.2px;top:710.3px;width:16px;height:16px;background:#ffffff;border-radius:8px;"></div>
<div style="position:absolute;left:1234.00px;top:763.00px;font-size:14.669500531349627px;line-height:14.669500531349627px;font-weight:400;color:#1a1a1a;white-space:nowrap;-webkit-text-stroke:0.35px #1a1a1a;">Display Format</div>
<div style="position:absolute;left:1234px;top:782.6px;width:320px;height:31px;background:#fff;border:1px solid #dcdfe5;box-sizing:border-box;border-radius:6px;"></div>
<div style="position:absolute;left:1242.00px;top:791.00px;font-size:13.1px;line-height:13.1px;font-weight:400;color:#1a1a1a;white-space:nowrap;">MMM DD, YYYY</div>
<svg style="position:absolute;left:1532px;top:792px;" width="13" height="10" viewBox="0 0 13 10" fill="none" stroke="#222" stroke-width="1.15" stroke-linecap="round" stroke-linejoin="round"><path d="M2 2.5l4.5 4.5 4.5-4.5" stroke="#4a5cf6" stroke-width="1.1"/></svg>
<div style="position:absolute;left:1197px;top:836px;width:392px;height:64px;background:#f4f5f7;"></div>
<div style="position:absolute;left:1197px;top:836px;width:392px;height:1px;background:#e6e8ec;"></div>
<div style="position:absolute;left:1197px;top:899px;width:392px;height:1px;background:#e3e6ea;"></div>
<div style="position:absolute;left:1221.5px;top:852px;width:79.2px;height:30.8px;background:#fff;border:1px solid #cfd3da;box-sizing:border-box;border-radius:6px;"></div>
<div style="position:absolute;left:961.00px;width:600px;text-align:center;top:861.00px;font-size:14.3px;line-height:14.3px;font-weight:400;color:#1a1a1a;white-space:nowrap;">Close</div>
<div style="position:absolute;left:1589px;top:0px;width:35px;height:900px;background:#000000;"></div>
<div style="position:absolute;left:1180px;top:194px;width:427.5px;height:121px;background:#fff;border:1.6px solid #111;border-radius:26px;box-sizing:border-box;box-shadow:0 9px 5px rgba(0,0,0,0.24);"></div>
<div style="position:absolute;left:1220.50px;top:208.00px;font-size:14.664804469273744px;line-height:14.664804469273744px;font-weight:400;color:#1a1a1a;white-space:nowrap;-webkit-text-stroke:0.35px #1a1a1a;">Field Name<span style="color:#e0262b;margin-left:4px;position:relative;top:1px;-webkit-text-stroke:0;font-weight:700;">*</span></div>
<div style="position:absolute;left:1220px;top:230px;width:351px;height:34.5px;background:#fff;border:1px solid #dcdfe5;box-sizing:border-box;border-radius:6px;"></div>
<div style="position:absolute;left:1228.60px;top:241.00px;font-size:14.8px;line-height:14.8px;font-weight:400;color:#1a1a1a;white-space:nowrap;">date_of_birth</div>
<div style="position:absolute;left:1220.00px;top:269.00px;font-size:14.4px;line-height:14.4px;font-weight:400;color:#5a6476;white-space:nowrap;">The field name has to be unique as it is used to</div>
<div style="position:absolute;left:1220.00px;top:291.00px;font-size:14.4px;line-height:14.4px;font-weight:400;color:#5a6476;white-space:nowrap;">generate URLs to pre-fill form data</div>
</body></html>
